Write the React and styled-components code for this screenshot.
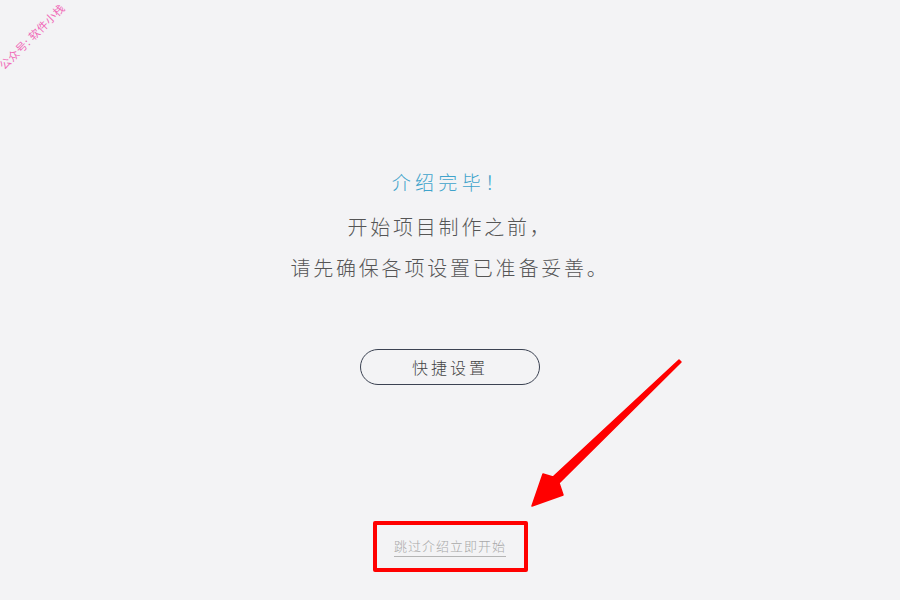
import styled, { createGlobalStyle } from 'styled-components'

const GlobalStyle = createGlobalStyle`
  html, body {
    margin: 0;
    padding: 0;
    background: #f3f3f5;
  }
  body {
    font-family: "Noto Sans CJK SC", "Noto Sans", sans-serif;
  }
`

const Page = styled.div`
  position: relative;
  width: 900px;
  height: 600px;
  display: flex;
  flex-direction: column;
  align-items: center;
  overflow: hidden;
`

const Watermark = styled.div`
  position: absolute;
  left: -12px;
  top: 28px;
  transform: rotate(-45deg);
  font-size: 11px;
  letter-spacing: 0.5px;
  color: #f06bb8;
  white-space: nowrap;
`

const Title = styled.h2`
  margin: 170px 0 0;
  font-size: 19px;
  font-weight: 300;
  line-height: 24px;
  letter-spacing: 4.3px;
  color: #3fa3cb;
`

const Intro = styled.p`
  margin: 12px 0 0;
  font-size: 20px;
  font-weight: 300;
  line-height: 41px;
  letter-spacing: 2.8px;
  color: #555;
  text-align: center;
`

const SetupButton = styled.button`
  margin-top: 61px;
  width: 180px;
  height: 36px;
  border: 1px solid #3b4252;
  border-radius: 18px;
  background: transparent;
  font-family: inherit;
  font-size: 16px;
  font-weight: 300;
  letter-spacing: 3px;
  color: #444;
  cursor: pointer;
`

const SkipBox = styled.div`
  margin-top: 136px;
  width: 147px;
  height: 43px;
  border: 4px solid #ff0000;
  border-radius: 2px;
  display: flex;
  align-items: center;
  justify-content: center;
`

const SkipLink = styled.a`
  font-size: 13px;
  font-weight: 300;
  letter-spacing: 1px;
  color: #a9a9a9;
  text-decoration: none;
  border-bottom: 1px solid #b5b5b5;
  padding-bottom: 1px;
  cursor: pointer;
`

const Arrow = styled.svg`
  position: absolute;
  left: 520px;
  top: 350px;
`

export default function App() {
  return (
    <>
      <GlobalStyle />
      <Page>
        <Watermark>公众号: 软件小栈</Watermark>
        <Title>介绍完毕！</Title>
        <Intro>
          开始项目制作之前，
          <br />
          请先确保各项设置已准备妥善。
        </Intro>
        <SetupButton>快捷设置</SetupButton>
        <SkipBox>
          <SkipLink>跳过介绍立即开始</SkipLink>
        </SkipBox>
        <Arrow width="180" height="170" viewBox="0 0 180 170">
          <path
            d="M159 10 L161 12 L39 133 L43 145 L12 156 L23 124 L33 127 Z"
            fill="#ff0000"
            stroke="#ff0000"
            strokeWidth="1.5"
            strokeLinejoin="round"
          />
        </Arrow>
      </Page>
    </>
  )
}
